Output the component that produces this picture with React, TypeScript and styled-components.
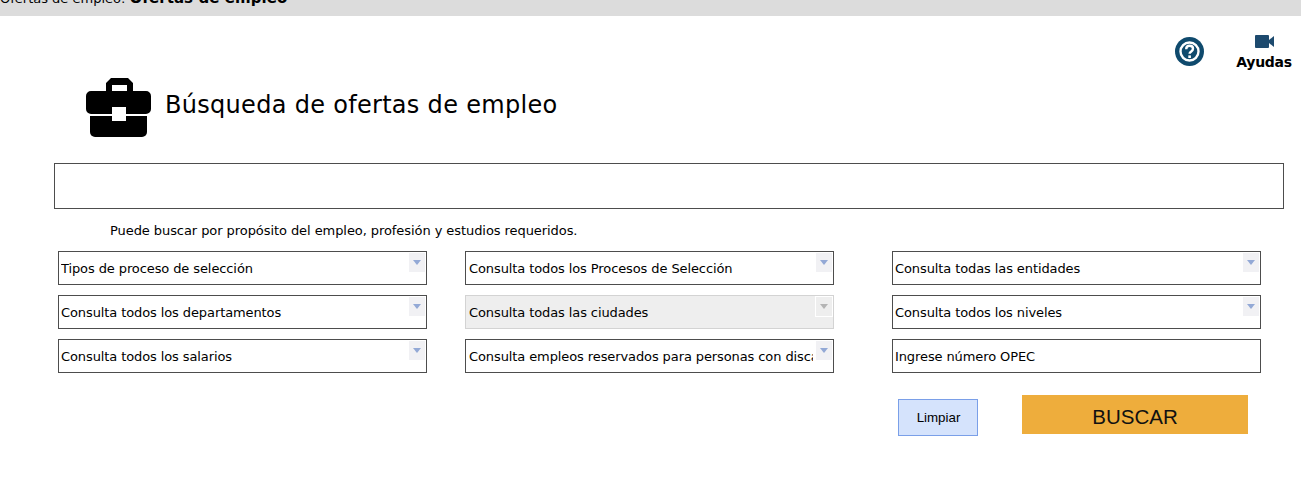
import styled, { createGlobalStyle } from "styled-components";

const GlobalStyle = createGlobalStyle`
  html, body {
    margin: 0;
    padding: 0;
    background: #fff;
    font-family: "DejaVu Sans", Verdana, sans-serif;
    color: #000;
  }
`;

const Page = styled.div`
  width: 1301px;
  height: 486px;
  overflow: hidden;
`;

const Breadcrumb = styled.div`
  height: 16px;
  background: #dcdcdc;
  overflow: hidden;
  font-size: 13px;
  line-height: 16px;
  white-space: nowrap;
  & > span {
    display: block;
    margin-top: -10px;
  }
  b {
    font-size: 15px;
    letter-spacing: 0.08px;
  }
`;

const HelpBar = styled.div`
  height: 42px;
  padding-top: 19px;
  display: flex;
  justify-content: flex-end;
`;

const HelpIcon = styled.svg`
  width: 29px;
  height: 29px;
  margin-top: 2px;
  margin-right: 32px;
`;

const VideoHelp = styled.div`
  width: 56px;
  margin-right: 9px;
  display: flex;
  flex-direction: column;
  align-items: center;
  font-size: 14px;
  font-weight: bold;
  letter-spacing: -0.3px;
  line-height: 16px;
  svg {
    width: 19px;
    height: 13px;
    margin-bottom: 6px;
  }
`;

const TitleRow = styled.div`
  display: flex;
  align-items: center;
  height: 61px;
  padding-left: 86px;
`;

const TitleIcon = styled.svg`
  width: 65px;
  height: 59px;
  margin-right: 14px;
`;

const Title = styled.h1`
  margin: 0;
  font-size: 24px;
  font-weight: normal;
  letter-spacing: 0.3px;
  line-height: 30px;
  position: relative;
  top: -3px;
`;

const SearchBox = styled.input`
  display: block;
  box-sizing: border-box;
  width: 1230px;
  height: 46px;
  margin: 25px 0 0 54px;
  border: 1px solid #4d4d4d;
  outline: none;
`;

const Hint = styled.p`
  margin: 14px 0 0 110px;
  font-size: 13px;
  letter-spacing: -0.07px;
  line-height: 16px;
`;

const FieldsGrid = styled.div`
  display: grid;
  grid-template-columns: 407px 427px 369px;
  grid-auto-rows: 34px;
  row-gap: 10px;
  margin: 12px 0 0 58px;
`;

const Field = styled.div<{ $disabled?: boolean }>`
  position: relative;
  box-sizing: border-box;
  width: 369px;
  height: 34px;
  padding: 0 20px 0 2px;
  border: 1px solid ${(p) => (p.$disabled ? "#d3d3d3" : "#4d4d4d")};
  background: ${(p) => (p.$disabled ? "#eeeeee" : "#fff")};
  font-size: 13px;
  letter-spacing: -0.1px;
  line-height: 33px;
  &:nth-child(3n + 2) {
    padding-left: 3px;
  }
`;

const FieldLabel = styled.span`
  display: block;
  white-space: nowrap;
  overflow: hidden;
`;

const ArrowBox = styled.span<{ $disabled?: boolean }>`
  position: absolute;
  top: 1px;
  right: 1px;
  width: 16px;
  height: 19px;
  background: ${(p) => (p.$disabled ? "#eeeeee" : "#f1f1f4")};
  box-shadow: ${(p) => (p.$disabled ? "0 0 0 1px #fff" : "none")};
  &::after {
    content: "";
    position: absolute;
    left: 4px;
    top: 7px;
    border-left: 4px solid transparent;
    border-right: 4px solid transparent;
    border-top: 5px solid ${(p) => (p.$disabled ? "#b4b4b4" : "#93a9d6")};
  }
`;

const Actions = styled.div`
  display: flex;
  align-items: flex-start;
  margin: 22px 0 0 898px;
`;

const ClearButton = styled.button`
  width: 80px;
  height: 37px;
  margin-top: 4px;
  padding: 0 0 0 1px;
  border: 1px solid #7a9fe8;
  background: #d5e3fc;
  font-family: "Liberation Sans", Arial, sans-serif;
  font-size: 13.33px;
  color: #000;
`;

const SearchButton = styled.button`
  width: 226px;
  height: 39px;
  margin-left: 44px;
  padding: 5px 0 0;
  border: none;
  background: #eead3c;
  font-family: "Liberation Sans", Arial, sans-serif;
  font-size: 20.5px;
  color: #111;
`;

const selects: { label: string; disabled?: boolean; plain?: boolean }[] = [
  { label: "Tipos de proceso de selección" },
  { label: "Consulta todos los Procesos de Selección" },
  { label: "Consulta todas las entidades" },
  { label: "Consulta todos los departamentos" },
  { label: "Consulta todas las ciudades", disabled: true },
  { label: "Consulta todos los niveles" },
  { label: "Consulta todos los salarios" },
  { label: "Consulta empleos reservados para personas con discapacidad" },
  { label: "Ingrese número OPEC", plain: true },
];

export default function App() {
  return (
    <Page>
      <GlobalStyle />
      <Breadcrumb>
        <span>
          Ofertas de empleo: <b>Ofertas de empleo</b>
        </span>
      </Breadcrumb>
      <HelpBar>
        <HelpIcon viewBox="0 0 29 29">
          <circle cx="14.5" cy="14.5" r="14.5" fill="#0f4a6d" />
          <circle cx="14.5" cy="14.5" r="9" fill="#0f4a6d" stroke="#fff" strokeWidth="2.4" />
          <path
            d="M11.2 12.2c0-2.200 1.500-3.400 3.400-3.400s3.400 1.200 3.400 3c0 2.700-3.400 2.500-3.400 5"
            fill="none"
            stroke="#fff"
            strokeWidth="2.4"
          />
          <rect x="13.3" y="18.4" width="2.600" height="2.600" fill="#fff" />
        </HelpIcon>
        <VideoHelp>
          <svg viewBox="0 0 19 13">
            <rect x="0" y="0" width="14" height="13" rx="1" fill="#1d4a6e" />
            <path d="M14 5l5-4v11l-5-4z" fill="#1d4a6e" />
          </svg>
          Ayudas
        </VideoHelp>
      </HelpBar>
      <TitleRow>
        <TitleIcon viewBox="0 0 65 59">
          <path
            fillRule="evenodd"
            d="M25 0h17l5 5v8h13a5 5 0 0 1 5 5v13a5 5 0 0 1-5 5H5a5 5 0 0 1-5-5V18a5 5 0 0 1 5-5h15V5zM26 7v6h15V7z"
            fill="#000"
          />
          <path d="M4 38h57v16a5 5 0 0 1-5 5H9a5 5 0 0 1-5-5z" fill="#000" />
          <rect x="26" y="29" width="14" height="14" fill="#fff" />
        </TitleIcon>
        <Title>Búsqueda de ofertas de empleo</Title>
      </TitleRow>
      <SearchBox />
      <Hint>Puede buscar por propósito del empleo, profesión y estudios requeridos.</Hint>
      <FieldsGrid>
        {selects.map((s) => (
          <Field key={s.label} $disabled={s.disabled}>
            <FieldLabel>{s.label}</FieldLabel>
            {!s.plain && <ArrowBox $disabled={s.disabled} />}
          </Field>
        ))}
      </FieldsGrid>
      <Actions>
        <ClearButton>Limpiar</ClearButton>
        <SearchButton>BUSCAR</SearchButton>
      </Actions>
    </Page>
  );
}
